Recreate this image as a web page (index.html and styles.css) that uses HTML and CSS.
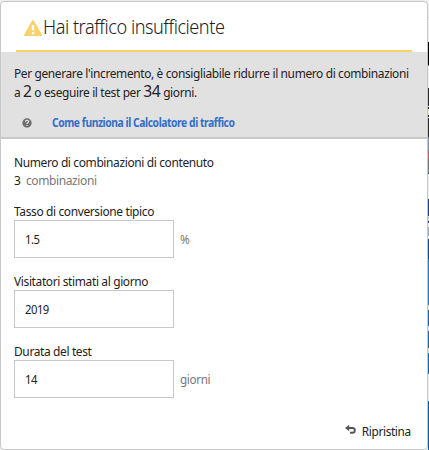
FILE: index.html
```html
<!DOCTYPE html>
<html lang="it">
<head>
<meta charset="utf-8">
<title>Calcolatore di traffico</title>
<link rel="stylesheet" href="styles.css">
</head>
<body>
<main class="panel">
  <header class="heading">
    <svg class="warning" viewBox="0 0 18 16"><path d="M8 .7Q9-.7 10 .7L17.8 14.6Q18.3 16 17 16H1Q-.3 16 .2 14.6Z" fill="#fad26c"/><path d="M7.8 5h2.4v5.6H7.8zM7.8 12h2.4v2.2H7.8z" fill="#fff"/></svg>
    <h1 class="title">Hai traffico insufficiente</h1>
  </header>
  <section class="advice">
    <p class="message">Per generare l'incremento, è consigliabile ridurre il numero di combinazioni<br>a <span class="big">2</span> o eseguire il test per <span class="big">34</span> giorni.</p>
    <div class="help">
      <svg class="question" viewBox="0 0 10 10"><circle cx="5" cy="5" r="4.7" fill="#707070"/><path d="M3.4 3.8C3.5 1.8 6.7 1.9 6.6 3.8C6.5 4.8 5.1 4.8 5 6M5 7v1.1" fill="none" stroke="#e1e1e1" stroke-width="1.2"/></svg>
      <a class="link">Come funziona il Calcolatore di traffico</a>
    </div>
  </section>
  <section class="form">
    <div class="label">Numero di combinazioni di contenuto</div>
    <div class="count">3 <span class="count-unit">combinazioni</span></div>
    <div class="label">Tasso di conversione tipico</div>
    <div class="field"><div class="input"><span class="value">1.5</span></div><span class="unit">%</span></div>
    <div class="label">Visitatori stimati al giorno</div>
    <div class="field"><div class="input"><span class="value">2019</span></div></div>
    <div class="label">Durata del test</div>
    <div class="field"><div class="input"><span class="value">14</span></div><span class="unit">giorni</span></div>
  </section>
  <footer class="reset">
    <svg class="undo" viewBox="0 0 11 9"><path d="M3 3H7.5Q9.8 3 9.8 5.2Q9.8 7.8 7.5 7.8H5" fill="none" stroke="#555" stroke-width="1.9"/><path d="M0 3L4.2 -.2V6.2Z" fill="#555"/></svg>
    <span class="reset-text">Ripristina</span>
  </footer>
</main>
</body>
</html>
```
FILE: styles.css
```css
* { box-sizing: border-box; }
body {
  margin: 0;
  height: 450px;
  overflow: hidden;
  padding: 1px 1px 0 0;
  font: 400 13px/18px "Noto Sans", sans-serif;
  letter-spacing: -.4px;
  color: #222;
  background: linear-gradient(#eee 0 17px, #ccc 17px 18px, #eee 18px 42px, #000 42px 65px, #999 65px 66px, #eee 66px 88px, #2b2b2b 88px 106px, #eee 106px 107px, #2b2b2b 107px 109px, #e5dfca 109px 115px, #2b2b2b 115px 117px, #eee 117px 118px, #2b2b2b 118px 137px, #8090a0 137px 150px, #777 150px 153px, #c66 153px 159px, #777 159px 173px, #1a4478 173px 174px, #eee 174px 199px, #1a4478 199px 216px, #ccc 216px 221px, #1a4478 221px 223px, #eee 223px 227px, #9aabbc 227px 236px, #eee 236px 239px, #1a4a78 239px 259px, #2f78b0 259px 305px, #ddd 305px 310px, #2468a0 310px 326px, #ddd 326px 331px, #2468a0 331px 348px, #ddd 348px 353px, #2468a0 353px 374px, #eee 374px 401px, #1d5a90 401px) right / 1px 100% no-repeat #eee;
}
.panel {
  display: flex;
  flex-direction: column;
  height: 449px;
  background: #fff;
  border: 1px solid #c8c8c8;
  border-radius: 4px;
}
.title, .message, .link, .label, .count, .value, .unit { transform: scaleX(.92); transform-origin: left; white-space: nowrap; }
.heading {
  display: flex;
  margin: 0 15px;
  padding: 16px 0 0 8px;
  height: 50px;
  border-bottom: 2px solid #fad26c;
}
.warning { flex: none; width: 18px; height: 16px; margin-top: 2px; }
.title { margin: -4px 0 0 1px; font-size: 20px; line-height: 26px; font-weight: 300; letter-spacing: -.5px; transform: scaleX(.905); }
.advice { height: 87px; padding: 12px 13px 0; background: #e1e1e1; border-bottom: 2px solid #c8c8c8; }
.message { margin: 0; transform: scaleX(.918); }
.big { font-size: 17px; line-height: 18px; }
.help { display: flex; align-items: center; margin-top: 13px; padding-left: 8px; }
.question { width: 10px; height: 10px; }
.link { margin-left: 20px; font-size: 12px; font-weight: 700; color: #326ec8; letter-spacing: -.5px; transform: scaleX(.86); }
.form { padding: 14px 13px 0; }
.label { height: 18px; }
.count { height: 18px; margin-bottom: 13px; }
.count-unit { margin-left: 3px; }
.unit, .count-unit { color: #777; }
.field { display: flex; align-items: center; height: 38px; gap: 6px; margin-bottom: 14px; }
.input { display: flex; align-items: center; width: 160px; height: 38px; padding: 0 10px; border: 1px solid #c8c8c8; background: #fff; }
.value { letter-spacing: -.6px; transform: scaleX(.87); }
.unit { transform: scaleX(.9); }
.reset { display: flex; align-items: center; justify-content: flex-end; gap: 1px; margin-top: auto; padding: 0 16px 9px 0; }
.reset-text { transform: scaleX(.91); transform-origin: right; }
.undo { width: 11px; height: 9px; margin-bottom: 3px; }
```
